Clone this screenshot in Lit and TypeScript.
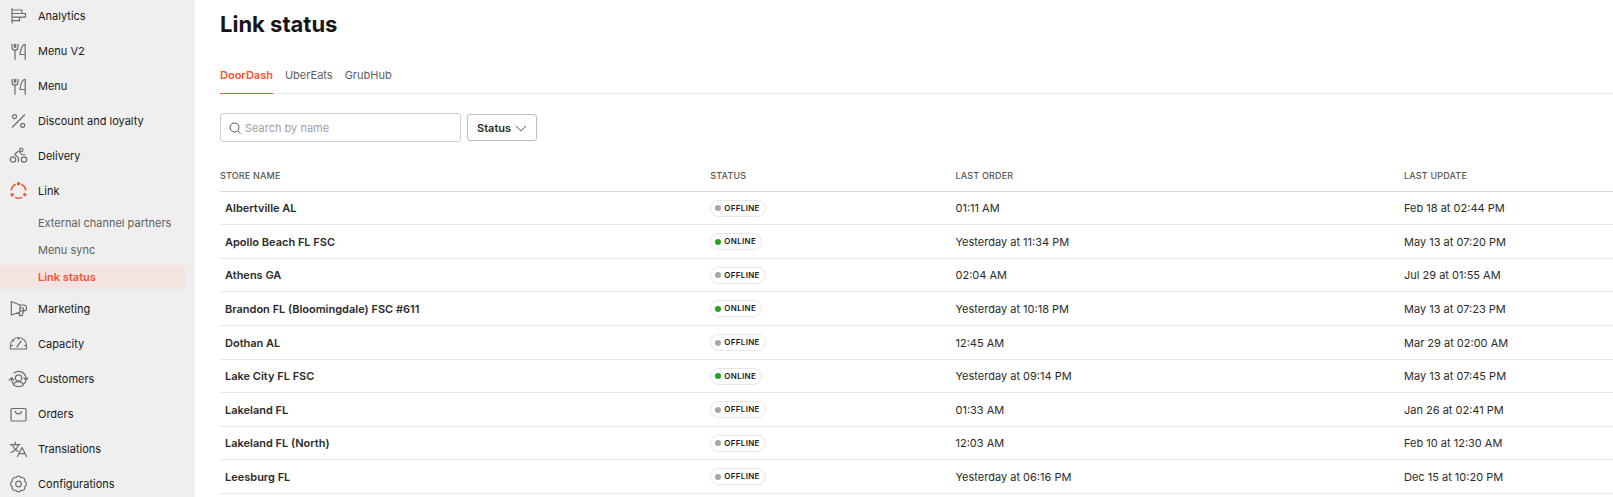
import { LitElement, html, css, svg, SVGTemplateResult } from "lit";
import { customElement, property, state } from "lit/decorators.js";
import { classMap } from "lit/directives/class-map.js";

const cutlery = svg`
  <path d="M3 2.300v2.900a3 3 0 0 0 6 0V2.300M5.400 2.300v3M6.700 2.300v3M6 8.500v8.800" />
  <path d="M16.200 17.300v-15c-2.600 0-4.700 4.600-5.200 10.200h5.200" />`;

const icons: Record<string, SVGTemplateResult> = {
  analytics: svg`<path d="M3 1.500v14.500M3 3h10v3.500H3M13 6.500h3.500v3.700H3M10.500 10.200v3.500H3" />`,
  menu: cutlery,
  percent: svg`<path d="M3.500 15 15.500 3" /><circle cx="5.500" cy="4.700" r="2" /><circle cx="13.700" cy="13.300" r="2" />`,
  delivery: svg`<circle cx="4" cy="12.500" r="2.700" /><circle cx="15" cy="12.500" r="2.700" /><circle cx="12.300" cy="2.700" r="1.700" />
    <path d="M9.400 14.500V10.600L6.300 8c-.5-.5-.4-1 .1-1.400l2.700-2c.5-.4 1-.3 1.400.1L12.700 7.500h3" />`,
  link: svg`<path d="M6.400 2.400a7.300 7.300 0 0 0-4.100 5.500M12.600 2.400a7.300 7.300 0 0 1 4.100 5.500M6.400 15.600a7.300 7.300 0 0 0 6.200 0" class="bold" />
    <g class="solid"><circle cx="9.500" cy="1.800" r="1.700" /><circle cx="3.200" cy="12.700" r="1.700" /><circle cx="15.800" cy="12.700" r="1.700" /></g>`,
  marketing: svg`<path d="M2.300 1.500v13.500l8.700-3V5zM11 5h3.700a2.900 2.900 0 0 1 0 5.800H11M9.800 12.500l1 3.200h2.400l1.300-4.900V8h-2.500" />`,
  capacity: svg`<path d="M1.500 14v-3.500a8 8 0 0 1 16 0V14zM8 11.800l4.200-6M9.500 2.500v1.700M3.700 5l1.200 1.200M1.500 10.500h2M15.500 10.500h2" />`,
  customers: svg`<circle cx="9.500" cy="8" r="3.200" /><path d="M4.500 15c.7-2.200 2.600-3.300 5-3.300s4.300 1.100 5 3.300c-2.800 2.200-7.200 2.200-10 0z" />
    <path d="M5 2.900a7.500 7.500 0 0 1 12 5.800M4.300 14a7.500 7.500 0 0 1-1.800-6M.3 10l2.200-2.300L4.700 10M14.800 7.800 17 10l1.800-2.200M14.700 14a7.500 7.500 0 0 0 2-3" />`,
  orders: svg`<rect x="2" y="3.500" width="15" height="12.500" rx="1" /><path d="M6.300 6.300c.5 3.300 5.900 3.300 6.400 0" />`,
  translations: svg`<path d="M1.300 4.700H11M6.200 2v2.700M9.500 4.700C8.500 8.500 5.500 11 2 12.500M3.500 4.700c.8 3 3 5.300 5.700 6.800M8.500 16.500 13 7.500l4.500 9M10 13.700h6" />`,
  settings: svg`<circle cx="9.500" cy="9" r="2.800" />
    <path d="M6.900 2.700A2.900 2.900 0 0 1 12.100 2.700A2.900 2.900 0 0 1 15.800 6.400A2.900 2.900 0 0 1 15.800 11.600A2.900 2.900 0 0 1 12.100 15.300A2.900 2.900 0 0 1 6.900 15.300A2.900 2.900 0 0 1 3.200 11.600A2.900 2.900 0 0 1 3.200 6.400A2.900 2.900 0 0 1 6.900 2.700z" />`,
};

interface NavEntry {
  label: string;
  icon: string;
  children?: string[];
}

const nav: NavEntry[] = [
  { label: "Analytics", icon: "analytics" },
  { label: "Menu V2", icon: "menu" },
  { label: "Menu", icon: "menu" },
  { label: "Discount and loyalty", icon: "percent" },
  { label: "Delivery", icon: "delivery" },
  { label: "Link", icon: "link", children: ["External channel partners", "Menu sync", "Link status"] },
  { label: "Marketing", icon: "marketing" },
  { label: "Capacity", icon: "capacity" },
  { label: "Customers", icon: "customers" },
  { label: "Orders", icon: "orders" },
  { label: "Translations", icon: "translations" },
  { label: "Configurations", icon: "settings" },
];

interface Store {
  name: string;
  online: boolean;
  order: string;
  update: string;
}

const stores: Store[] = [
  { name: "Albertville AL", online: false, order: "01:11 AM", update: "Feb 18 at 02:44 PM" },
  { name: "Apollo Beach FL FSC", online: true, order: "Yesterday at 11:34 PM", update: "May 13 at 07:20 PM" },
  { name: "Athens GA", online: false, order: "02:04 AM", update: "Jul 29 at 01:55 AM" },
  { name: "Brandon FL (Bloomingdale) FSC #611", online: true, order: "Yesterday at 10:18 PM", update: "May 13 at 07:23 PM" },
  { name: "Dothan AL", online: false, order: "12:45 AM", update: "Mar 29 at 02:00 AM" },
  { name: "Lake City FL FSC", online: true, order: "Yesterday at 09:14 PM", update: "May 13 at 07:45 PM" },
  { name: "Lakeland FL", online: false, order: "01:33 AM", update: "Jan 26 at 02:41 PM" },
  { name: "Lakeland FL (North)", online: false, order: "12:03 AM", update: "Feb 10 at 12:30 AM" },
  { name: "Leesburg FL", online: false, order: "Yesterday at 06:16 PM", update: "Dec 15 at 10:20 PM" },
];

@customElement("side-nav")
class SideNav extends LitElement {
  @property() current = "Link status";

  static styles = css`
    :host {
      display: block;
      background: #efefef;
    }
    ul {
      list-style: none;
      margin: 0;
      padding: 0;
      display: flex;
      flex-direction: column;
      gap: 3px;
    }
    a {
      color: #191919;
      text-decoration: none;
      display: flex;
      align-items: center;
    }
    .item {
      height: 32px;
      gap: 11px;
      padding-left: 9px;
    }
    .sub {
      padding: 4px 10px 1px 0;
    }
    .leaf {
      height: 24px;
      padding-left: 38px;
      border-radius: 0 3px 3px 0;
      color: #606060;
    }
    .leaf.current {
      background: #f3e4e1;
      color: #ff5130;
      font-weight: 600;
    }
    svg {
      width: 18px;
      height: 18px;
      flex: none;
      overflow: visible;
      fill: none;
      stroke: #6c6c6c;
      stroke-width: 1.2;
      stroke-linecap: round;
      stroke-linejoin: round;
    }
    .active svg {
      stroke: #ff5130;
    }
    .bold {
      stroke-width: 1.5;
    }
    .solid {
      fill: #ff5130;
      stroke: none;
    }
  `;

  render() {
    return html`<nav aria-label="Main">
      <ul>
        ${nav.map(
          (entry) => html`<li>
            <a href="#" class=${classMap({ item: true, active: !!entry.children })}>
              <svg viewBox="0 0 18 18" aria-hidden="true">${icons[entry.icon]}</svg>
              ${entry.label}
            </a>
            ${entry.children
              ? html`<ul class="sub">
                  ${entry.children.map(
                    (label) => html`<li>
                      <a href="#" class=${classMap({ leaf: true, current: label === this.current })}>${label}</a>
                    </li>`
                  )}
                </ul>`
              : null}
          </li>`
        )}
      </ul>
    </nav>`;
  }
}

@customElement("status-pill")
class StatusPill extends LitElement {
  @property({ type: Boolean }) online = false;

  static styles = css`
    :host {
      display: flex;
    }
    .pill {
      display: flex;
      align-items: center;
      gap: 3px;
      height: 15px;
      padding: 0 5px 0 4px;
      border: 1px solid #e6e6e6;
      border-radius: 9px;
      font-size: 8px;
      line-height: 15px;
      font-weight: 600;
      letter-spacing: 0.04em;
      color: #191919;
    }
    .dot {
      width: 6px;
      height: 6px;
      border-radius: 50%;
      background: #a6a6a6;
    }
    .dot.on {
      background: #27a01f;
    }
  `;

  render() {
    return html`<span class="pill">
      <span class=${classMap({ dot: true, on: this.online })}></span>${this.online ? "ONLINE" : "OFFLINE"}
    </span>`;
  }
}

@customElement("app-root")
class AppRoot extends LitElement {
  @state() private tab = "DoorDash";
  @state() private query = "";

  static styles = css`
    :host {
      display: grid;
      grid-template-columns: 195px minmax(0, 1fr);
      height: 100vh;
      overflow: hidden;
      background: #fff;
      color: #2b2b2b;
      font: 11px/16px Inter, sans-serif;
    }
    main {
      padding: 8px 0 0 25px;
    }
    h1 {
      margin: 0;
      font-size: 22px;
      line-height: 32px;
      font-weight: 700;
      color: #161616;
    }
    button,
    input {
      font: inherit;
      color: inherit;
    }
    .tabs {
      display: flex;
      gap: 12px;
      margin-top: 19px;
      box-shadow: inset 0 -1px #ebebeb;
    }
    .tab {
      border: 0;
      background: none;
      padding: 8px 0 10px;
      color: #606060;
      border-bottom: 1px solid transparent;
    }
    .tab.selected {
      color: #ff5130;
      font-weight: 600;
      border-color: #ff5130;
    }
    .filters {
      display: flex;
      align-items: center;
      gap: 6px;
      margin-top: 19px;
    }
    .search {
      display: flex;
      align-items: center;
      gap: 4px;
      box-sizing: border-box;
      width: 241px;
      height: 29px;
      padding: 0 8px;
      border: 1px solid #cfcfcf;
      border-radius: 3px;
    }
    .search input {
      flex: 1;
      min-width: 0;
      border: 0;
      padding: 0;
      outline: 0;
      background: none;
    }
    .search input::placeholder {
      color: #a0a0a0;
    }
    .icon {
      width: 12px;
      height: 12px;
      fill: none;
      stroke: #555;
    }
    .status {
      display: flex;
      align-items: center;
      gap: 4px;
      height: 27px;
      padding: 0 9px;
      border: 1px solid #bdbdbd;
      border-radius: 3px;
      background: #fff;
      font-weight: 600;
    }
    table {
      width: 100%;
      margin-top: 18px;
      table-layout: fixed;
      border-collapse: separate;
      border-spacing: 0;
    }
    th,
    td {
      box-sizing: border-box;
      padding: 0;
      text-align: left;
      font-weight: 400;
      border-bottom: 1px solid #e8e8e8;
    }
    thead th {
      height: 32px;
      font-size: 9px;
      font-weight: 500;
      letter-spacing: 0.02em;
      color: #555;
      border-color: #dadada;
    }
    tbody tr {
      height: 34px;
    }
    tbody tr:nth-child(5n + 1),
    tbody tr:nth-child(5n + 3) {
      height: 33px;
    }
    tbody th {
      padding-left: 5px;
      font-weight: 600;
    }
    .store {
      width: 35.2%;
    }
    .state {
      width: 17.6%;
    }
    .order {
      width: 32.2%;
    }
  `;

  render() {
    const shown = stores.filter((s) => s.name.toLowerCase().includes(this.query.toLowerCase()));
    return html`
      <side-nav></side-nav>
      <main>
        <h1>Link status</h1>
        <div class="tabs" role="tablist">
          ${["DoorDash", "UberEats", "GrubHub"].map(
            (name) => html`<button
              role="tab"
              aria-selected=${name === this.tab}
              class=${classMap({ tab: true, selected: name === this.tab })}
              @click=${() => (this.tab = name)}
            >${name}</button>`
          )}
        </div>
        <div class="filters">
          <label class="search">
            <svg class="icon" viewBox="0 0 12 12" aria-hidden="true">
              <circle cx="5.500" cy="5.500" r="4.500" /><path d="M8.800 8.800l2.700 2.700" />
            </svg>
            <input
              type="text"
              aria-label="Search by name"
              placeholder="Search by name"
              @input=${(e: Event) => (this.query = (e.target as HTMLInputElement).value)}
            />
          </label>
          <button class="status">
            Status
            <svg class="icon" viewBox="0 0 12 12" aria-hidden="true"><path d="M1 4 6 8.800 11 4" /></svg>
          </button>
        </div>
        <table>
          <thead>
            <tr>
              <th scope="col" class="store">STORE NAME</th>
              <th scope="col" class="state">STATUS</th>
              <th scope="col" class="order">LAST ORDER</th>
              <th scope="col">LAST UPDATE</th>
            </tr>
          </thead>
          <tbody>
            ${shown.map(
              (s) => html`<tr>
                <th scope="row">${s.name}</th>
                <td><status-pill ?online=${s.online}></status-pill></td>
                <td>${s.order}</td>
                <td>${s.update}</td>
              </tr>`
            )}
          </tbody>
        </table>
      </main>
    `;
  }
}
